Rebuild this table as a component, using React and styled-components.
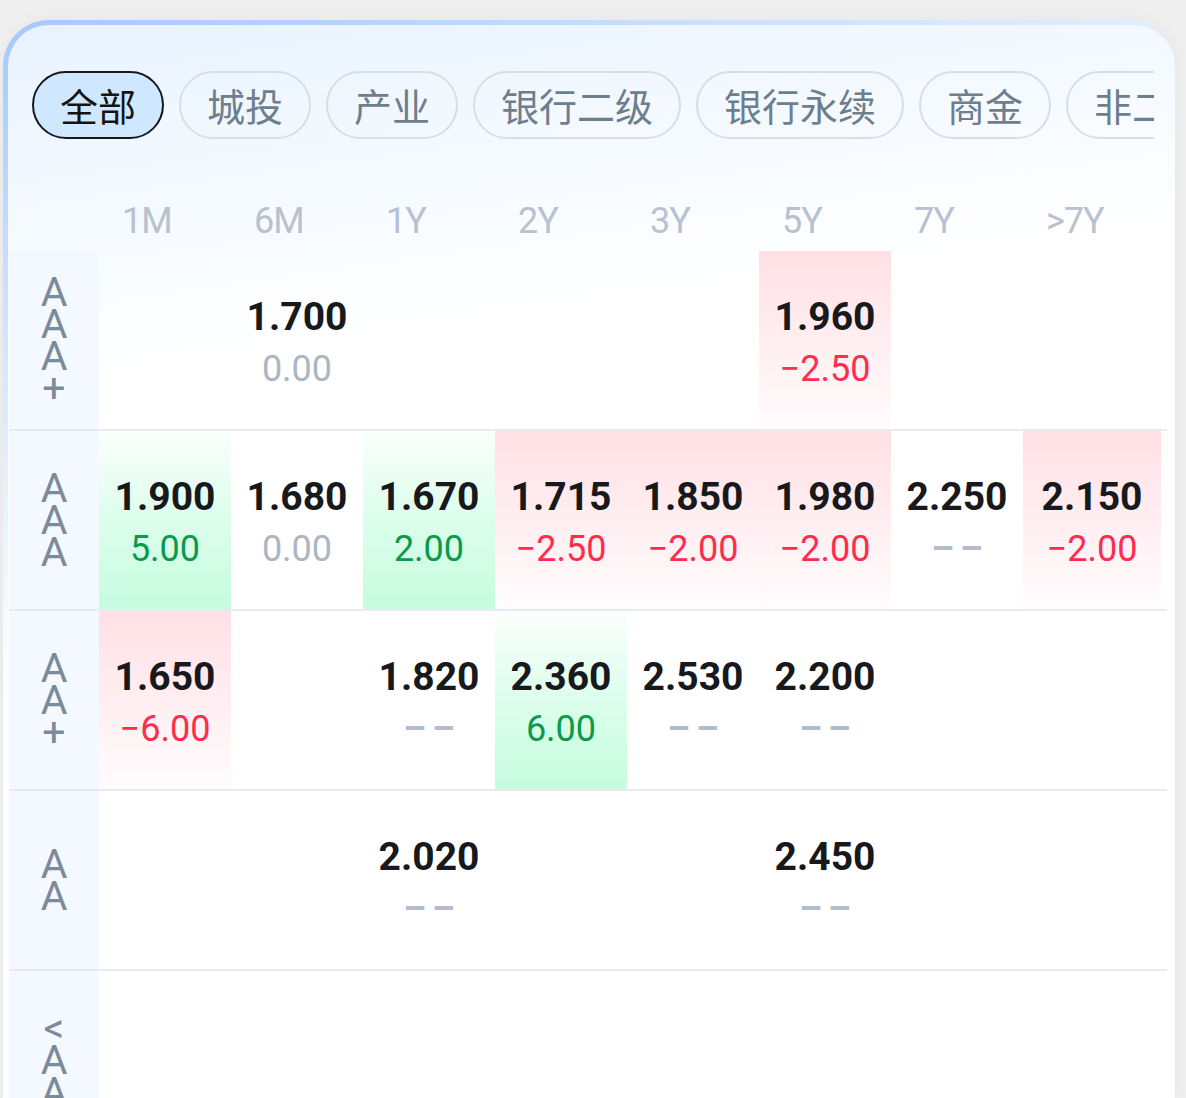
import styled, { createGlobalStyle } from "styled-components";

const GlobalStyle = createGlobalStyle`
  body {
    margin: 0;
    background: #efefef;
    font-family: Roboto, "Noto Sans CJK SC", sans-serif;
    overflow: hidden;
  }
`;

const tabs = ["全部", "城投", "产业", "银行二级", "银行永续", "商金", "非二永"];
const terms = ["1M", "6M", "1Y", "2Y", "3Y", "5Y", "7Y", ">7Y"];

// each cell: [value, change, tone]  tone: up / down / flat / none
const rows = [
  {
    label: "AAA+",
    cells: [null, ["1.700", "0.00", "flat"], null, null, null, ["1.960", "−2.50", "down"], null, null],
  },
  {
    label: "AAA",
    cells: [
      ["1.900", "5.00", "up"],
      ["1.680", "0.00", "flat"],
      ["1.670", "2.00", "up"],
      ["1.715", "−2.50", "down"],
      ["1.850", "−2.00", "down"],
      ["1.980", "−2.00", "down"],
      ["2.250", "––", "none"],
      ["2.150", "−2.00", "down"],
    ],
  },
  {
    label: "AA+",
    cells: [
      ["1.650", "−6.00", "down"],
      null,
      ["1.820", "––", "none"],
      ["2.360", "6.00", "up"],
      ["2.530", "––", "none"],
      ["2.200", "––", "none"],
      null,
      null,
    ],
  },
  {
    label: "AA",
    cells: [null, null, ["2.020", "––", "none"], null, null, ["2.450", "––", "none"], null, null],
  },
  { label: "<AA", cells: [null, null, null, null, null, null, null, null] },
];

const Frame = styled.div`
  margin: 20px 0 0 3px;
  width: 1172px;
  height: 1078px;
  box-sizing: border-box;
  padding: 5px 0 0 5px;
  border-radius: 46px 46px 0 0;
  background: linear-gradient(160deg, #a4c8ff 0%, #d4e6ff 22%, #ffffff 45%);
  box-shadow: 0 0 18px rgba(0, 0, 0, 0.04);
  overflow: hidden;
`;

const Card = styled.div`
  height: 100%;
  box-sizing: border-box;
  padding-top: 46px;
  border-radius: 41px 41px 0 0;
  background: linear-gradient(172deg, #e8f3ff 0%, #f3f9ff 14%, #ffffff 30%);
`;

const TabBar = styled.div`
  display: flex;
  gap: 15px;
  margin: 0 21px 0 24px;
  overflow: hidden;
`;

const Tab = styled.div`
  flex-shrink: 0;
  display: flex;
  align-items: center;
  height: 68px;
  box-sizing: border-box;
  padding: 0 26px;
  border-radius: 34px;
  border: 2px solid ${(p) => (p.active ? "#16181b" : "#d7dee6")};
  background: ${(p) => (p.active ? "#d0e8ff" : "transparent")};
  color: ${(p) => (p.active ? "#141414" : "#6d7e8d")};
  font-family: "Noto Sans CJK SC", sans-serif;
  font-size: 38px;
  line-height: 1;
`;

const Grid = styled.div`
  display: grid;
  grid-template-columns: 90px repeat(7, 132px) 1fr;
  width: 1158px;
  box-sizing: border-box;
  padding-right: 6px;
  margin-left: 1px;
`;

const HeadRow = styled(Grid)`
  height: 112px;
  align-items: end;
  padding-bottom: 10px;
`;

const HeadCell = styled.div`
  padding-left: 23px;
  font-size: 36px;
  line-height: 40px;
  letter-spacing: -1px;
  color: #b7c1cf;
`;

const Row = styled(Grid)`
  height: 180px;
  border-bottom: 2px solid #e7ebf0;
`;

const Label = styled.div`
  display: flex;
  flex-direction: column;
  align-items: center;
  justify-content: center;
  background: #f4f9ff;
  color: #7b8b99;
  font-size: 41px;
  line-height: 32px;
`;

const toneBg = {
  up: "linear-gradient(180deg, #fbfffd 0%, #dcfeeb 50%, #c6fcdf 100%)",
  down: "linear-gradient(180deg, #ffe0e5 0%, #ffeef1 50%, #fffcfd 100%)",
};

const toneColor = {
  up: "#0b9a4c",
  down: "#ff2c4e",
  flat: "#abb5c4",
  none: "#b3bccb",
};

const Cell = styled.div`
  display: flex;
  flex-direction: column;
  align-items: center;
  justify-content: center;
  padding-top: 6px;
  background: ${(p) => toneBg[p.tone] || "transparent"};
`;

const Value = styled.div`
  font-size: 39px;
  font-weight: 700;
  line-height: 52px;
  color: #17191d;
`;

const Change = styled.div`
  font-size: 36px;
  line-height: 52px;
  color: ${(p) => toneColor[p.tone]};
  font-weight: ${(p) => (p.tone === "none" ? 700 : 400)};
  letter-spacing: ${(p) => (p.tone === "none" ? "6px" : "0")};
  margin-right: ${(p) => (p.tone === "none" ? "-6px" : "0")};
`;

export default function App() {
  return (
    <>
      <GlobalStyle />
      <Frame>
        <Card>
          <TabBar>
            {tabs.map((t, i) => (
              <Tab key={t} active={i === 0}>
                {t}
              </Tab>
            ))}
          </TabBar>
          <HeadRow>
            <div />
            {terms.map((t) => (
              <HeadCell key={t}>{t}</HeadCell>
            ))}
          </HeadRow>
          {rows.map((row) => (
            <Row key={row.label}>
              <Label>
                {row.label.split("").map((ch, i) => (
                  <span key={i}>{ch}</span>
                ))}
              </Label>
              {row.cells.map((c, i) =>
                c ? (
                  <Cell key={i} tone={c[2]}>
                    <Value>{c[0]}</Value>
                    <Change tone={c[2]}>{c[1]}</Change>
                  </Cell>
                ) : (
                  <Cell key={i} />
                )
              )}
            </Row>
          ))}
        </Card>
      </Frame>
    </>
  );
}
